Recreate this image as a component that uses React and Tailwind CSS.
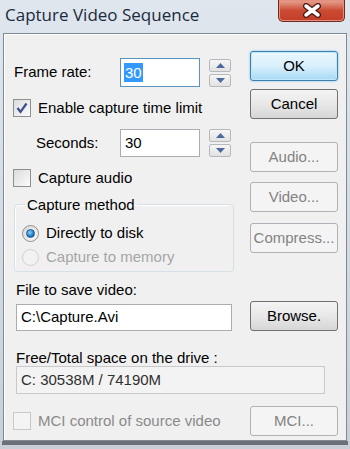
const FONT = { fontFamily: '"Liberation Sans", Arial, sans-serif' };

function Button({ children, disabled, primary, className = '' }) {
    let look = 'border-[#707070] bg-gradient-to-b from-[#f4f4f4] via-[#e8e8e8] to-[#d6d6d6] text-black';
    if (primary) {
        look = 'border-[#3c7fb1] bg-gradient-to-b from-[#eaf6fd] via-[#d9f0fc] to-[#a7d9f5] text-black shadow-[inset_0_0_0_1px_#c4e8fb,0_0_2px_#5ab4ee]';
    }
    if (disabled) {
        look = 'border-[#adb2b5] bg-[#f4f4f4] text-[#838383]';
    }
    return (
        <div className={`flex h-[30px] w-[88px] items-center justify-center rounded-[3px] border text-[15px] ${look} ${className}`}>
            {children}
        </div>
    );
}

function Spinner() {
    return (
        <div className="flex flex-col gap-[2px]">
            {['up', 'down'].map((dir) => (
                <div
                    key={dir}
                    className="flex h-[13px] w-[22px] items-center justify-center rounded-[2px] border border-[#b5b9bd] bg-gradient-to-b from-[#f6f6f6] to-[#e2e2e2]"
                >
                    <svg width="9" height="5" viewBox="0 0 9 5">
                        {dir === 'up' ? (
                            <path d="M0 5 L4.5 0 L9 5 Z" fill="#4e6a9c" />
                        ) : (
                            <path d="M0 0 L4.5 5 L9 0 Z" fill="#4e6a9c" />
                        )}
                    </svg>
                </div>
            ))}
        </div>
    );
}

function Checkbox({ checked, disabled }) {
    return (
        <div
            className={`flex h-[18px] w-[18px] items-center justify-center border ${
                disabled ? 'border-[#c8c8c8] bg-[#f4f4f4]' : 'border-[#8e8f8f] bg-gradient-to-br from-[#dcdcdc] to-[#fbfbfb]'
            }`}
        >
            {checked && (
                <svg width="12" height="12" viewBox="0 0 12 12">
                    <path d="M1.5 6 L4.5 10 L10.5 1.5" fill="none" stroke="#3b4f8f" strokeWidth="2.2" />
                </svg>
            )}
        </div>
    );
}

function Radio({ checked, disabled }) {
    return (
        <div
            className={`flex h-[17px] w-[17px] items-center justify-center rounded-full border ${
                disabled ? 'border-[#d0d0d0] bg-[#f2f2f2]' : 'border-[#8e8f8f] bg-gradient-to-br from-[#d8d8d8] to-[#fafafa]'
            }`}
        >
            {checked && (
                <div className="h-[9px] w-[9px] rounded-full border border-[#1b5f92] bg-[radial-gradient(circle_at_40%_35%,#8fd4fb,#1f7cc4_60%,#0d4f8c)]" />
            )}
        </div>
    );
}

export default function App() {
    return (
        <div className="flex h-[449px] w-[350px] flex-col overflow-hidden bg-gradient-to-b from-[#dfe6ee] via-[#d3dbe4] to-[#c9cfd6]" style={FONT}>
            {/* title bar */}
            <div className="flex h-[33px] shrink-0 items-start justify-between pl-[5px] pr-[5px]">
                <span className="mt-[5px] text-[17px] leading-[20px] text-[#1c2a3c]" style={{ fontFamily: '"Open Sans", "Noto Sans", sans-serif' }}>
                    Capture Video Sequence
                </span>
                <div className="flex h-[22px] w-[67px] items-center justify-center rounded-b-[5px] border border-t-0 border-[#6b2c22] bg-gradient-to-b from-[#e5a595] via-[#cc4a33] to-[#c23e28] shadow-[inset_0_0_0_1px_#e98d7c]">
                    <svg width="20" height="15" viewBox="0 0 20 15">
                        <path d="M4 3 L16 12 M16 3 L4 12" stroke="#4a1a14" strokeWidth="6" strokeLinecap="round" />
                        <path d="M4 3 L16 12 M16 3 L4 12" stroke="#ffffff" strokeWidth="3.5" strokeLinecap="round" />
                    </svg>
                </div>
            </div>

            {/* client area */}
            <div className="mx-[3px] h-[408px] shrink-0 border border-[#7f8a97] bg-[#f0f0f0] text-[15px] text-black shadow-[inset_1px_1px_0_#ffffff]">
                <div className="flex">
                    <div className="ml-[9px] flex w-[221px] flex-col">
                        <div className="mt-[24px] flex h-[29px] items-center">
                            <span className="ml-[1px] w-[106px]">Frame rate:</span>
                            <div className="flex h-[29px] w-[80px] items-center border border-[#5794bf] bg-white pl-[3px]">
                                <span className="bg-[#3399ff] px-[1px] leading-[19px] text-white">30</span>
                            </div>
                            <div className="ml-[9px]">
                                <Spinner />
                            </div>
                        </div>

                        <div className="mt-[12px] flex h-[18px] items-center gap-[7px]">
                            <Checkbox checked />
                            <span>Enable capture time limit</span>
                        </div>

                        <div className="mt-[12px] flex h-[28px] items-center">
                            <span className="ml-[23px] w-[84px]">Seconds:</span>
                            <div className="flex h-[28px] w-[80px] items-center border border-[#abadb3] bg-white pl-[4px]">30</div>
                            <div className="ml-[9px]">
                                <Spinner />
                            </div>
                        </div>

                        <div className="mt-[12px] flex h-[18px] items-center gap-[7px]">
                            <Checkbox />
                            <span>Capture audio</span>
                        </div>

                        <fieldset className="mt-[9px] ml-[1px] h-[76px] w-[220px] rounded-[4px] border border-[#d5dfe5] px-0 shadow-[inset_1px_1px_0_#ffffff]">
                            <legend className="ml-[10px] px-[2px] leading-[17px]">Capture method</legend>
                            <div className="mt-[12px] ml-[7px] flex h-[17px] items-center gap-[7px]">
                                <Radio checked />
                                <span>Directly to disk</span>
                            </div>
                            <div className="mt-[7px] ml-[7px] flex h-[17px] items-center gap-[7px] text-[#a6a6a6]">
                                <Radio disabled />
                                <span>Capture to memory</span>
                            </div>
                        </fieldset>
                    </div>

                    <div className="ml-[16px] flex w-[88px] flex-col">
                        <Button primary className="mt-[17px] h-[29px]">OK</Button>
                        <Button className="mt-[8px]">Cancel</Button>
                        <Button disabled className="mt-[23px]">Audio...</Button>
                        <Button disabled className="mt-[10px]">Video...</Button>
                        <Button disabled className="mt-[11px]">Compress...</Button>
                    </div>
                </div>

                <div className="ml-[12px] mt-[9px] leading-[17px]">File to save video:</div>
                <div className="mt-[3px] flex h-[30px] items-end">
                    <div className="ml-[12px] flex h-[27px] w-[216px] items-center border border-[#abadb3] bg-white pl-[4px]">C:\Capture.Avi</div>
                    <Button className="ml-[18px]">Browse.</Button>
                </div>

                <div className="ml-[12px] mt-[18px] leading-[17px]">Free/Total space on the drive :</div>
                <div className="ml-[12px] flex h-[28px] w-[309px] items-center border border-[#c9c9c9] bg-[#f3f3f3] pl-[4px] text-[#303030]">
                    C: 30538M / 74190M
                </div>

                <div className="mt-[12px] flex h-[30px] items-center">
                    <div className="ml-[9px] flex w-[228px] items-center gap-[7px] text-[#8a8a8a]">
                        <Checkbox disabled />
                        <span>MCI control of source video</span>
                    </div>
                    <Button disabled className="ml-[9px]">MCI...</Button>
                </div>
            </div>

            <div className="mx-[2px] h-[4px] shrink-0 bg-[#6c7177]" />
        </div>
    );
}
